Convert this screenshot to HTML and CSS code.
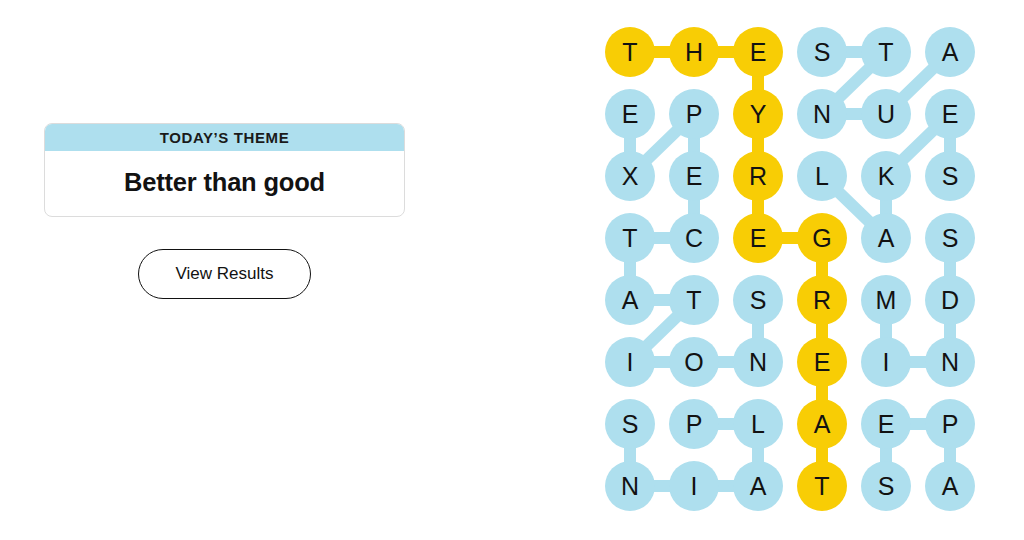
FILE: index.html
```html
<!DOCTYPE html>
<html>
<head>
<meta charset="utf-8">
<link rel="stylesheet" href="styles.css">
</head>
<body>
<main class="page">
  <section class="info">
    <div class="theme-card">
      <div class="theme-head">TODAY’S THEME</div>
      <div class="theme-body">Better than good</div>
    </div>
    <button class="results-btn">View Results</button>
  </section>
  <section class="board-wrap">
    <div class="board">
      <svg class="links" width="370" height="484" viewBox="0 0 370 484">
        <g fill="none" stroke-width="12" stroke-linejoin="round">
          <polyline class="ln-blue" points="25,87 25,149 89,87 89,149 89,211 25,211 25,273 89,273 25,335 89,335 153,335 153,273"/>
          <polyline class="ln-blue" points="89,397 153,397 153,459 89,459 25,459 25,397"/>
          <polyline class="ln-blue" points="345,25 281,87 217,87 281,25 217,25"/>
          <polyline class="ln-blue" points="217,149 281,211 281,149 345,87 345,149"/>
          <polyline class="ln-blue" points="281,273 281,335 345,335 345,273 345,211"/>
          <polyline class="ln-blue" points="345,459 345,397 281,397 281,459"/>
          <polyline class="ln-gold" points="25,25 89,25 153,25 153,87 153,149 153,211 217,211 217,273 217,335 217,397 217,459"/>
        </g>
      </svg>
      <span class="cell gold">T</span><span class="cell gold">H</span><span class="cell gold">E</span><span class="cell">S</span><span class="cell">T</span><span class="cell">A</span>
      <span class="cell">E</span><span class="cell">P</span><span class="cell gold">Y</span><span class="cell">N</span><span class="cell">U</span><span class="cell">E</span>
      <span class="cell">X</span><span class="cell">E</span><span class="cell gold">R</span><span class="cell">L</span><span class="cell">K</span><span class="cell">S</span>
      <span class="cell">T</span><span class="cell">C</span><span class="cell gold">E</span><span class="cell gold">G</span><span class="cell">A</span><span class="cell">S</span>
      <span class="cell">A</span><span class="cell">T</span><span class="cell">S</span><span class="cell gold">R</span><span class="cell">M</span><span class="cell">D</span>
      <span class="cell">I</span><span class="cell">O</span><span class="cell">N</span><span class="cell gold">E</span><span class="cell">I</span><span class="cell">N</span>
      <span class="cell">S</span><span class="cell">P</span><span class="cell">L</span><span class="cell gold">A</span><span class="cell">E</span><span class="cell">P</span>
      <span class="cell">N</span><span class="cell">I</span><span class="cell">A</span><span class="cell gold">T</span><span class="cell">S</span><span class="cell">A</span>
    </div>
  </section>
</main>
</body>
</html>
```
FILE: styles.css
```css
html, body {
  margin: 0;
  padding: 0;
  background: #ffffff;
}
body {
  width: 1024px;
  height: 540px;
  overflow: hidden;
  font-family: "Liberation Sans", Arial, sans-serif;
  color: #121212;
}
.page {
  display: flex;
  flex-direction: row;
}
.info {
  width: 361px;
  padding: 123px 0 0 44px;
  display: flex;
  flex-direction: column;
  align-items: center;
}
.theme-card {
  width: 361px;
  box-sizing: border-box;
  border: 1px solid #dcdcdc;
  border-radius: 8px;
  overflow: hidden;
  background: #fff;
}
.theme-head {
  background: #aedfee;
  height: 27px;
  line-height: 28px;
  text-align: center;
  font-size: 15px;
  font-weight: 700;
  letter-spacing: 0.6px;
  color: #1a1a1a;
}
.theme-body {
  height: 65px;
  line-height: 63px;
  text-align: center;
  font-size: 25.5px;
  font-weight: 700;
  letter-spacing: -0.2px;
  color: #121212;
}
.results-btn {
  margin-top: 32px;
  width: 173px;
  height: 50px;
  border: 1px solid #121212;
  border-radius: 25px;
  background: #fff;
  font-family: "Liberation Sans", Arial, sans-serif;
  font-size: 17px;
  color: #121212;
  padding: 0;
}
.board-wrap {
  padding: 27px 0 0 200px;
}
.board {
  position: relative;
  display: grid;
  grid-template-columns: repeat(6, 50px);
  grid-auto-rows: 50px;
  column-gap: 14px;
  row-gap: 12px;
}
.links {
  position: absolute;
  left: 0;
  top: 0;
  z-index: 0;
}
.ln-blue { stroke: #aedfee; }
.ln-gold { stroke: #f8cd05; }
.cell {
  position: relative;
  z-index: 1;
  width: 50px;
  height: 50px;
  border-radius: 50%;
  background: #aedfee;
  display: flex;
  align-items: center;
  justify-content: center;
  font-size: 25px;
  color: #121212;
}
.cell.gold {
  background: #f8cd05;
}
```
